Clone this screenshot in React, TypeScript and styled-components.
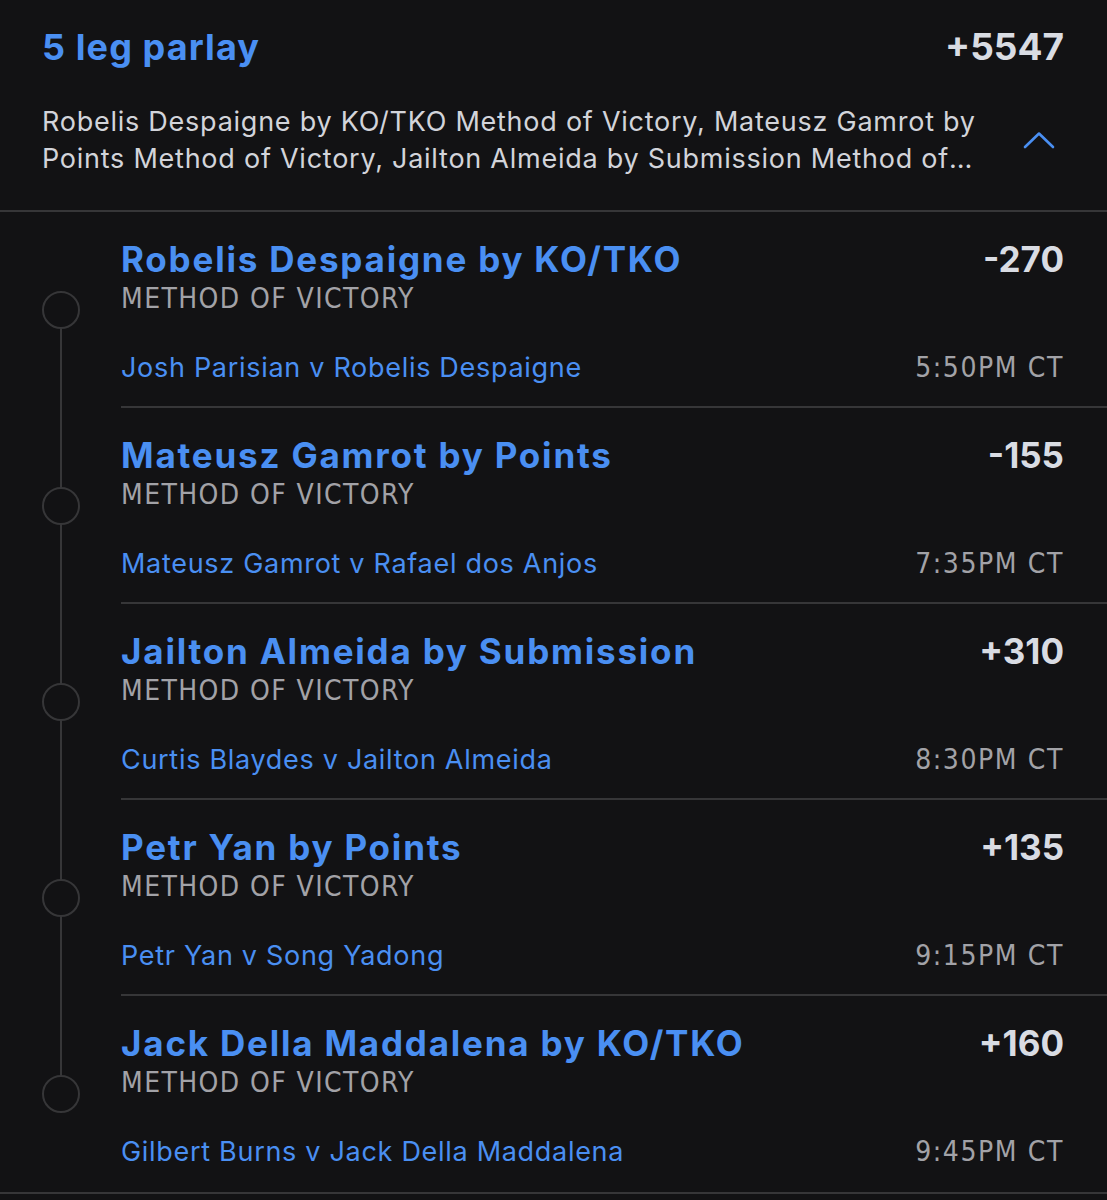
import React from "react";
import styled, { createGlobalStyle } from "styled-components";

const GlobalStyle = createGlobalStyle`
  html, body {
    margin: 0;
    padding: 0;
    background: #121214;
  }
  body {
    font-family: Inter, "Noto Sans", sans-serif;
    -webkit-font-smoothing: antialiased;
  }
`;

const BLUE = "#4a8ff2";
const LIGHT = "#d9dce3";
const GRAY = "#a2a2a7";
const LINE = "#363638";
const SANS = `Inter, "Noto Sans", sans-serif`;
const NARROW = `"Liberation Sans Narrow", "DejaVu Sans Condensed", Roboto, sans-serif`;

const Page = styled.div`
  width: 1107px;
  min-height: 1200px;
  background: #121214;
  overflow: hidden;
`;

const Header = styled.header`
  padding: 24px 43px 33px 42px;
  border-bottom: 2px solid ${LINE};
`;

const TopRow = styled.div`
  display: flex;
  justify-content: space-between;
  align-items: baseline;
`;

const Title = styled.h1`
  margin: 0;
  font-family: ${SANS};
  font-weight: 700;
  font-size: 36px;
  line-height: 46px;
  letter-spacing: 1.1px;
  color: ${BLUE};
`;

const TotalOdds = styled.span`
  font-family: ${SANS};
  font-weight: 700;
  font-size: 37px;
  line-height: 46px;
  color: ${LIGHT};
`;

const DescRow = styled.div`
  display: flex;
  align-items: center;
  justify-content: space-between;
  margin-top: 33px;
`;

const Description = styled.p`
  margin: 0;
  width: 945px;
  font-family: ${SANS};
  font-size: 27px;
  line-height: 37px;
  letter-spacing: 0.75px;
  color: #d2d4da;
  display: -webkit-box;
  -webkit-line-clamp: 2;
  -webkit-box-orient: vertical;
  overflow: hidden;
`;

const Chevron = styled.svg`
  width: 32px;
  height: 18px;
  margin-right: 9px;
  flex-shrink: 0;
`;

const Legs = styled.div`
  border-bottom: 2px solid ${LINE};
`;

const Leg = styled.div`
  display: grid;
  grid-template-columns: 121px 1fr;
  height: 196px;
`;

const Track = styled.div`
  display: flex;
  flex-direction: column;
  align-items: center;
  width: 121px;
`;

const Segment = styled.div<{ $visible: boolean }>`
  flex: 1;
  width: 2px;
  background: ${(p) => (p.$visible ? LINE : "transparent")};
`;

const Dot = styled.div`
  width: 34px;
  height: 34px;
  border: 2px solid ${LINE};
  border-radius: 50%;
  flex-shrink: 0;
`;

const Body = styled.div<{ $last: boolean }>`
  display: flex;
  flex-direction: column;
  padding: 26px 43px 0 0;
  border-bottom: ${(p) => (p.$last ? "none" : `2px solid ${LINE}`)};
`;

const LegTop = styled.div`
  display: flex;
  justify-content: space-between;
  align-items: baseline;
`;

const Pick = styled.div`
  font-family: ${SANS};
  font-weight: 700;
  font-size: 35px;
  line-height: 42px;
  letter-spacing: 1.8px;
  color: ${BLUE};
`;

const Odds = styled.div`
  font-family: ${SANS};
  font-weight: 700;
  font-size: 35px;
  line-height: 42px;
  color: ${LIGHT};
`;

const Market = styled.div`
  font-family: ${NARROW};
  font-size: 28px;
  line-height: 32px;
  margin-top: 3px;
  letter-spacing: 1.4px;
  color: ${GRAY};
`;

const LegBottom = styled.div`
  display: flex;
  justify-content: space-between;
  align-items: baseline;
  margin-top: 35px;
`;

const Matchup = styled.div`
  font-family: ${SANS};
  font-size: 27px;
  line-height: 36px;
  letter-spacing: 0.7px;
  color: ${BLUE};
`;

const Time = styled.div`
  font-family: ${NARROW};
  font-size: 28px;
  line-height: 36px;
  letter-spacing: 1.6px;
  color: ${GRAY};
`;

const legs = [
  { pick: "Robelis Despaigne by KO/TKO", odds: "-270", match: "Josh Parisian v Robelis Despaigne", time: "5:50PM CT" },
  { pick: "Mateusz Gamrot by Points", odds: "-155", match: "Mateusz Gamrot v Rafael dos Anjos", time: "7:35PM CT" },
  { pick: "Jailton Almeida by Submission", odds: "+310", match: "Curtis Blaydes v Jailton Almeida", time: "8:30PM CT" },
  { pick: "Petr Yan by Points", odds: "+135", match: "Petr Yan v Song Yadong", time: "9:15PM CT" },
  { pick: "Jack Della Maddalena by KO/TKO", odds: "+160", match: "Gilbert Burns v Jack Della Maddalena", time: "9:45PM CT" },
];

export default function App() {
  return (
    <Page>
      <GlobalStyle />
      <Header>
        <TopRow>
          <Title>5 leg parlay</Title>
          <TotalOdds>+5547</TotalOdds>
        </TopRow>
        <DescRow>
          <Description>
            Robelis Despaigne by KO/TKO Method of Victory, Mateusz Gamrot by Points Method of Victory, Jailton Almeida by Submission Method of Victory, Petr Yan by Points Method of Victory, Jack Della Maddalena by KO/TKO Method of Victory
          </Description>
          <Chevron viewBox="0 0 32 18" fill="none">
            <path d="M2 16 L16 2.5 L30 16" stroke={BLUE} strokeWidth="2.6" strokeLinecap="round" strokeLinejoin="round" />
          </Chevron>
        </DescRow>
      </Header>
      <Legs>
        {legs.map((l, i) => (
          <Leg key={l.pick}>
            <Track>
              <Segment $visible={i > 0} />
              <Dot />
              <Segment $visible={i < legs.length - 1} />
            </Track>
            <Body $last={i === legs.length - 1}>
              <LegTop>
                <Pick>{l.pick}</Pick>
                <Odds>{l.odds}</Odds>
              </LegTop>
              <Market>METHOD OF VICTORY</Market>
              <LegBottom>
                <Matchup>{l.match}</Matchup>
                <Time>{l.time}</Time>
              </LegBottom>
            </Body>
          </Leg>
        ))}
      </Legs>
    </Page>
  );
}
